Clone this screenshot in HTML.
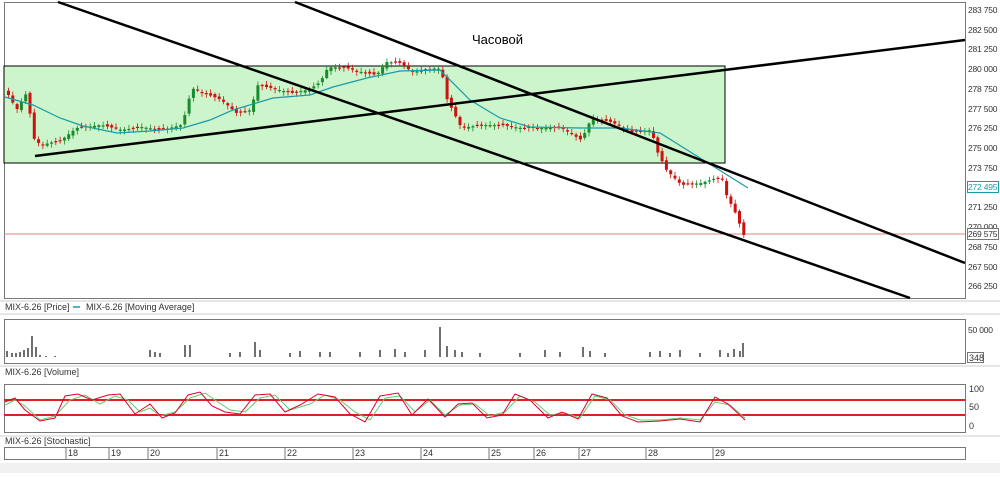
<!DOCTYPE html><html><head><meta charset="utf-8"><style>
body{margin:0;background:#fff;width:1000px;height:473px;overflow:hidden;font-family:"Liberation Sans",sans-serif}
svg text{font-family:"Liberation Sans",sans-serif;font-size:9px;fill:#333}
svg .ax text{font-size:8.5px;letter-spacing:-0.2px}
</style></head><body>
<svg id="s" width="1000" height="473" viewBox="0 0 1000 473">
<rect x="0" y="463" width="1000" height="10" fill="#f0f0f0"/>
<rect x="4.5" y="2.5" width="961" height="296" fill="#fff" stroke="#777"/>
<rect x="4" y="66" width="721" height="97" fill="#ccf5cc" stroke="#000"/>
<line x1="4" y1="234" x2="965" y2="234" stroke="#e08080" stroke-width="1"/>
<g id="candles"></g>
<polyline fill="none" stroke="#1a9aa8" stroke-width="1.2" points="5,97 33,105 60,118 83,126 117,133 150,131 183,128 210,120 233,110 273,98 310,95 333,87 367,78 400,71 440,70 470,100 500,118 530,127 580,128 620,128 660,133 700,158 748,188"/>
<g stroke="#000" stroke-width="2.5">
<line x1="58" y1="2" x2="910" y2="298"/>
<line x1="295" y1="2" x2="965" y2="263"/>
<line x1="35" y1="156" x2="965" y2="40"/>
</g>
<text x="472" y="44" style="font-size:13px;fill:#000">Часовой</text>
<g class="ax">
<text x="968" y="13">283 750</text><text x="968" y="33">282 500</text><text x="968" y="52">281 250</text><text x="968" y="72">280 000</text><text x="968" y="92">278 750</text><text x="968" y="112">277 500</text><text x="968" y="131">276 250</text><text x="968" y="151">275 000</text><text x="968" y="171">273 750</text><text x="968" y="210">271 250</text><text x="968" y="230">270 000</text><text x="968" y="250">268 750</text><text x="968" y="270">267 500</text><text x="968" y="289">266 250</text>
<rect x="967.5" y="181.5" width="31" height="11" fill="#fff" stroke="#1a9aa8"/><text x="968" y="190" style="fill:#1a9aa8">272 495</text>
<rect x="967.5" y="228.5" width="31" height="11" fill="#fff" stroke="#777"/><text x="968" y="237">269 575</text>
<text x="968" y="333">50 000</text>
</g>
<line x1="0" y1="301" x2="1000" y2="301" stroke="#ccc"/>
<text x="5" y="310">MIX-6.26 [Price]</text><line x1="73" y1="307" x2="80" y2="307" stroke="#1a9aa8" stroke-width="1.5"/><text x="86" y="310">MIX-6.26 [Moving Average]</text>
<line x1="0" y1="314" x2="1000" y2="314" stroke="#ccc"/>
<rect x="4.5" y="319.5" width="961" height="44" fill="#fff" stroke="#777"/>
<path stroke="#222" stroke-width="1.3" d="M7 357V351M12 357V353M16 357V353M20 357V352M24 357V350M28 357V348M32 357V336M36 357V347M40 357V355M46 357V356M55 357V356M150 357V350M155 357V352M160 357V353M185 357V345M190 357V345M230 357V353M240 357V352M255 357V342M260 357V350M290 357V353M300 357V351M320 357V352M330 357V352M360 357V352M380 357V350M395 357V349M405 357V352M425 357V350M440 357V327M447 357V346M455 357V350M462 357V352M480 357V353M520 357V353M545 357V350M560 357V352M583 357V347M590 357V351M605 357V353M650 357V352M660 357V351M670 357V353M680 357V350M700 357V353M720 357V350M728 357V353M734 357V349M740 357V351M743 357V343"/>
<rect x="967.5" y="352.5" width="16" height="10" fill="#fff" stroke="#777"/><text x="969" y="361">348</text>
<line x1="0" y1="366" x2="1000" y2="366" stroke="#ccc"/>
<text x="5" y="375">MIX-6.26 [Volume]</text>
<rect x="4.5" y="384.5" width="961" height="48" fill="#fff" stroke="#777"/>
<line x1="4" y1="400" x2="965" y2="400" stroke="#e02020" stroke-width="2"/>
<line x1="4" y1="415" x2="965" y2="415" stroke="#e02020" stroke-width="2"/>
<polyline fill="none" stroke="#6c6" stroke-width="1" points="5,405 15,400 25,406 40,420 55,416 70,400 85,395 100,404 115,396 128,400 140,412 150,408 160,416 175,412 190,398 205,393 218,402 230,410 245,412 260,398 275,395 290,410 310,404 325,395 340,400 355,412 370,420 385,398 400,396 415,412 430,400 445,415 460,405 475,404 490,416 505,412 520,396 535,402 550,415 565,413 580,418 595,396 610,400 625,415 640,420 660,420 680,418 700,420 715,402 730,405 745,418"/>
<polyline fill="none" stroke="#d03" stroke-width="1" points="5,402 15,398 25,410 40,421 55,418 65,396 78,394 92,400 108,395 120,394 135,414 150,404 162,418 175,413 188,395 200,392 212,406 225,412 240,414 255,395 270,394 285,412 300,405 318,394 335,397 350,414 365,422 380,396 398,393 412,415 428,399 445,417 458,404 472,403 487,418 502,415 515,394 530,400 548,418 562,412 578,419 592,394 607,398 622,416 638,422 660,421 680,419 700,422 715,397 728,404 745,420"/>
<text x="969" y="392">100</text><text x="969" y="410">50</text><text x="969" y="429">0</text>
<line x1="0" y1="436" x2="1000" y2="436" stroke="#ccc"/>
<text x="5" y="444">MIX-6.26 [Stochastic]</text>
<rect x="4.5" y="447.5" width="961" height="12" fill="#fff" stroke="#777"/>
<g stroke="#777"><path d="M66 447V459M109 447V459M148 447V459M217 447V459M285 447V459M353 447V459M421 447V459M489 447V459M534 447V459M579 447V459M646 447V459M713 447V459"/></g>
<g><text x="68" y="456">18</text><text x="111" y="456">19</text><text x="150" y="456">20</text><text x="219" y="456">21</text><text x="287" y="456">22</text><text x="355" y="456">23</text><text x="423" y="456">24</text><text x="491" y="456">25</text><text x="536" y="456">26</text><text x="581" y="456">27</text><text x="648" y="456">28</text><text x="715" y="456">29</text></g>
</svg>
<script>
(function(){
var pts=[[7,95],[10,100],[15,110],[25,93],[33,140],[40,145],[60,140],[75,128],[100,125],[120,130],[140,127],[160,130],[180,125],[185,110],[190,88],[200,92],[220,100],[235,113],[250,110],[255,85],[270,88],[290,93],[305,90],[315,85],[320,80],[325,70],[330,67],[345,68],[360,72],[375,75],[385,62],[400,63],[410,72],[425,70],[435,68],[440,70],[445,98],[450,108],[460,128],[480,125],[500,125],[520,128],[560,128],[580,140],[590,118],[610,122],[630,132],[650,130],[655,150],[665,170],[680,185],[700,183],[715,178],[722,180],[725,195],[735,215],[742,235]];
function f(x){for(var i=1;i<pts.length;i++){if(x<=pts[i][0]){var a=pts[i-1],b=pts[i],t=(x-a[0])/(b[0]-a[0]);return a[1]+t*(b[1]-a[1]);}}return pts[pts.length-1][1];}
var g=document.getElementById('candles'),h='',prev=f(5);
for(var x=7;x<=744;x+=4.3){var c=f(x),o=prev+(Math.sin(x*1.7)*1.5);var tp=Math.min(o,c),bt=Math.max(o,c);var up=c<o;var col=up?'#1a8a2a':'#d01010';if(bt-tp<1.2){bt=tp+1.2;}
var w1=tp-1-Math.abs(Math.sin(x))*3,w2=bt+1+Math.abs(Math.cos(x))*3;
h+='<line x1="'+(x+1.5).toFixed(1)+'" y1="'+w1.toFixed(1)+'" x2="'+(x+1.5).toFixed(1)+'" y2="'+w2.toFixed(1)+'" stroke="'+col+'" stroke-width="0.8"/>';
h+='<rect x="'+x.toFixed(1)+'" y="'+tp.toFixed(1)+'" width="3" height="'+(bt-tp).toFixed(1)+'" fill="'+col+'"/>';prev=c;}
g.innerHTML=h;
})();
</script>
</body></html>
